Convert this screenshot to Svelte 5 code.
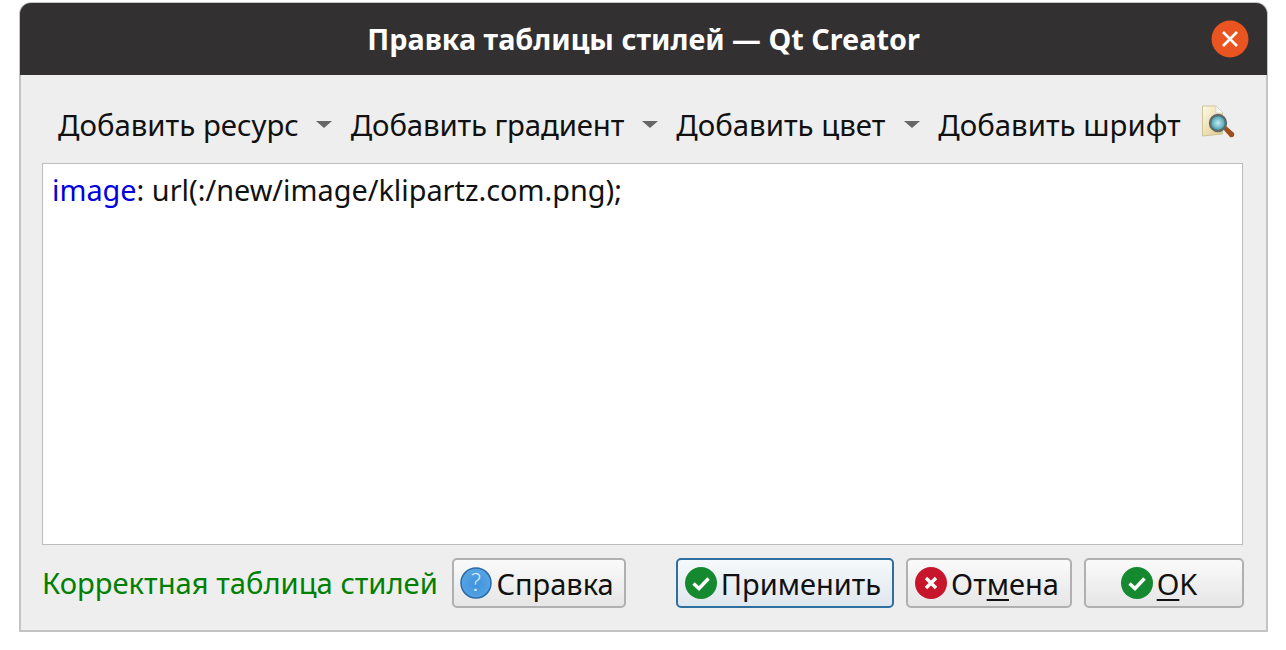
<script lang="ts">
	const tools = ['Добавить ресурс', 'Добавить градиент', 'Добавить цвет'];
</script>

{#snippet okIcon()}
	<svg class="icon" viewBox="0 0 32 32">
		<circle cx="16" cy="16" r="16" fill="#15892f" />
		<path d="M8.5 16.5l5.5 5 9.500-10" fill="none" stroke="#fff" stroke-width="3.400" />
	</svg>
{/snippet}

<div class="window">
	<header class="titlebar">
		<span class="title">Правка таблицы стилей — Qt Creator</span>
		<button class="close" aria-label="Закрыть">
			<svg viewBox="0 0 38 38" width="38" height="38">
				<circle cx="19" cy="19" r="18.500" fill="#e95420" />
				<path d="M12 12l14 14M26 12l-14 14" stroke="#fff" stroke-width="2.600" />
			</svg>
		</button>
	</header>

	<div class="body">
		<div class="toolbar">
			{#each tools as tool}
				<div class="tool">
					<span>{tool}</span>
					<i class="caret"></i>
				</div>
			{/each}
			<span class="tool-last">Добавить шрифт</span>
			<svg class="finder" viewBox="0 0 33 33" width="33" height="33">
				<defs>
					<linearGradient id="page" x1="0" y1="0" x2="1" y2="1">
						<stop offset="0" stop-color="#fffbe6" />
						<stop offset="1" stop-color="#dcc783" />
					</linearGradient>
					<radialGradient id="lens">
						<stop offset="0" stop-color="#c4eef2" />
						<stop offset="1" stop-color="#3a97a8" />
					</radialGradient>
				</defs>
				<path d="M.5 1h13l7 7v21l-20 2z" fill="url(#page)" stroke="#cfc49a" />
				<path d="M14 1v7h7z" fill="#fff" stroke="#c9c4b0" stroke-width=".6" />
				<path d="M21 24l3-3 8 7c1 3-1 5-4 4z" fill="#9c4f1c" />
				<circle cx="16" cy="18" r="8" fill="url(#lens)" stroke="#5e6a6c" stroke-width="2.400" />
			</svg>
		</div>

		<div class="editor"><span class="prop">image</span>: url(:/new/image/klipartz.com.png);</div>

		<div class="footer">
			<span class="valid">Корректная таблица стилей</span>
			<button class="btn help">
				<svg class="icon" viewBox="0 0 32 32">
					<defs>
						<radialGradient id="ball" cy="0.55" r="0.6">
							<stop offset="0" stop-color="#3f92dc" />
							<stop offset="1" stop-color="#5aa8e6" />
						</radialGradient>
					</defs>
					<circle cx="16" cy="16" r="15" fill="url(#ball)" stroke="#2a6aa8" stroke-width="1.500" />
					<text x="16" y="24" text-anchor="middle" class="q">?</text>
				</svg>
				<span>Справка</span>
			</button>
			<div class="spacer"></div>
			<button class="btn apply">{@render okIcon()}<span>Применить</span></button>
			<button class="btn cancel">
				<svg class="icon" viewBox="0 0 32 32">
					<circle cx="16" cy="16" r="16" fill="#c7162b" />
					<path d="M11 11l10 10M21 11l-10 10" stroke="#fff" stroke-width="3.400" />
				</svg>
				<span>От<u>м</u>ена</span>
			</button>
			<button class="btn ok">{@render okIcon()}<span><u>O</u>K</span></button>
		</div>
	</div>
</div>

<style>
	:global(body) {
		margin: 0;
		background: #fff;
		font-family: 'Noto Sans', 'Open Sans', sans-serif;
	}

	.window {
		box-sizing: border-box;
		width: 1249px;
		height: 630px;
		margin: 2px 0 0 19px;
		display: flex;
		flex-direction: column;
		border-radius: 12px 12px 0 0;
		background: #c4c4c4;
		padding: 1px 2px 2px 2px;
	}

	.titlebar {
		height: 72px;
		flex: none;
		background: #323030;
		border-radius: 11px 11px 0 0;
		margin: 0 -1px 0 -1px;
		display: flex;
		align-items: center;
		justify-content: center;
		position: relative;
	}

	.title {
		color: #fff;
		font-weight: 700;
		font-size: 28.8px;
		line-height: 1;
		padding-top: 1px;
	}

	.close {
		position: absolute;
		right: 18px;
		top: 17px;
		width: 38px;
		height: 38px;
		padding: 0;
		border: 0;
		background: none;
		line-height: 0;
	}

	.body {
		flex: 1;
		min-height: 0;
		background: #eee;
		display: flex;
		flex-direction: column;
		padding: 0 23px 0 21px;
	}

	.toolbar {
		box-sizing: border-box;
		height: 88px;
		flex: none;
		display: flex;
		align-items: center;
		padding: 11px 0 0 16px;
		font-size: 29.4px;
		color: #111;
		white-space: nowrap;
	}

	.tool {
		display: flex;
		align-items: center;
	}

	.tool:nth-child(2) span {
		letter-spacing: -0.15px;
	}

	.caret {
		width: 0;
		height: 0;
		margin: 0 18.500px 0 17.500px;
		border-left: 8px solid transparent;
		border-right: 8px solid transparent;
		border-top: 7px solid #666;
	}

	.tool:nth-child(3) .caret {
		margin-left: 18.500px;
	}

	.finder {
		margin: 0 0 6px 21px;
	}

	.editor {
		box-sizing: border-box;
		height: 382px;
		flex: none;
		background: #fff;
		border: 1px solid #bcbcbc;
		padding: 8px 9px;
		font-size: 28.85px;
		line-height: 36px;
		color: #111;
	}

	.prop {
		color: #0000e0;
	}

	.footer {
		display: flex;
		align-items: center;
		margin: 13px -1px 0 0;
		height: 50px;
		font-size: 29px;
	}

	.valid {
		color: #008000;
		width: 410px;
		flex: none;
		font-size: 29.2px;
		white-space: nowrap;
	}

	.spacer {
		flex: 1;
	}

	.btn {
		box-sizing: border-box;
		height: 50px;
		display: flex;
		align-items: center;
		justify-content: center;
		gap: 4px;
		padding: 0 4px 0 0;
		font: inherit;
		color: #111;
		border: 2px solid #b0b0b0;
		border-radius: 5px;
		background: linear-gradient(#fafafa, #e6e6e6);
		white-space: nowrap;
	}

	.help {
		width: 174px;
	}

	.apply {
		width: 218px;
		border-color: #2f6f9f;
		background: linear-gradient(#f6f9fb, #dfe7ee);
	}

	.cancel {
		width: 166px;
		margin-left: 12px;
	}

	.ok {
		width: 160px;
		margin-left: 12px;
		padding-right: 10px;
	}

	.icon {
		width: 32px;
		height: 32px;
		flex: none;
	}

	.q {
		fill: #e4f0fb;
		font-size: 25px;
		font-weight: 300;
		font-family: Lato, 'Noto Sans', sans-serif;
	}

	u {
		text-underline-offset: 4px;
	}
</style>
